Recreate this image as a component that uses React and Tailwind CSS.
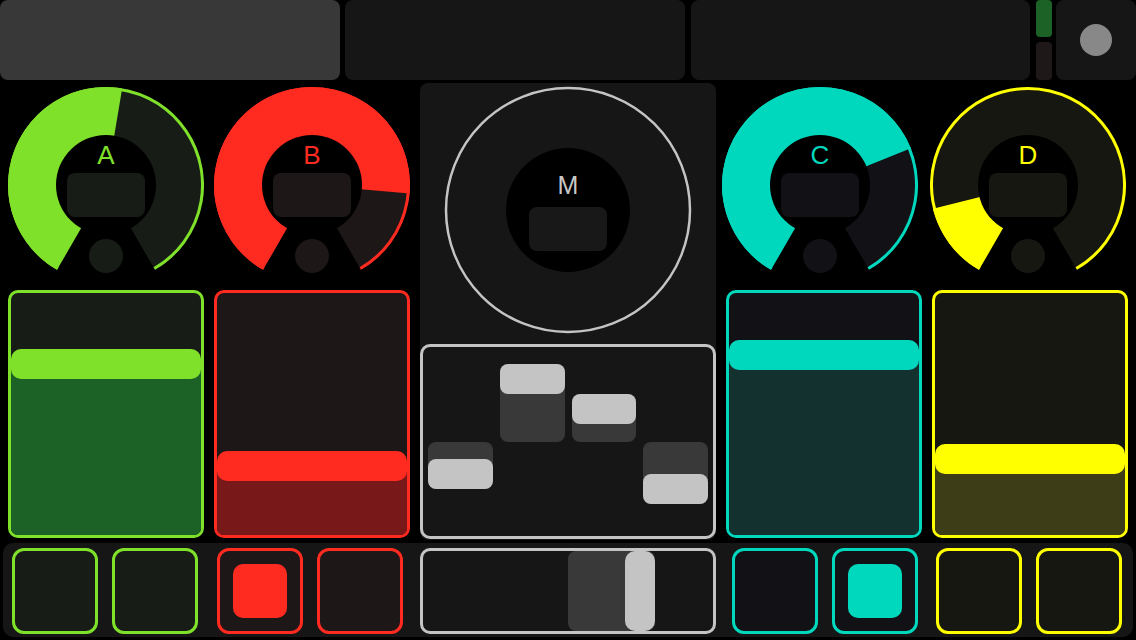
import React from 'react';

const channels = [
  { id: 'A', color: '#80e12b', track: '#171c17', fill: '#1c6125', knob: 9.5, fader: 56, shift: '' },
  { id: 'B', color: '#ff2b20', track: '#1d1717', fill: '#791818', knob: 95, fader: 158, shift: '' },
  { id: 'C', color: '#00d8be', track: '#111116', fill: '#13322f', knob: 68, fader: 47, shift: '-ml-[4px]' },
  { id: 'D', color: '#ffff00', track: '#171711', fill: '#3d3d17', knob: -104, fader: 151, shift: '-ml-[2px]' },
];

function polar(cx, cy, r, deg) {
  const a = ((deg - 90) * Math.PI) / 180;
  return [cx + r * Math.cos(a), cy + r * Math.sin(a)];
}

function sector(cx, cy, r, a0, a1) {
  const [x0, y0] = polar(cx, cy, r, a0);
  const [x1, y1] = polar(cx, cy, r, a1);
  const large = a1 - a0 > 180 ? 1 : 0;
  return `M ${cx} ${cy} L ${x0} ${y0} A ${r} ${r} 0 ${large} 1 ${x1} ${y1} Z`;
}

function arc(cx, cy, r, a0, a1) {
  const [x0, y0] = polar(cx, cy, r, a0);
  const [x1, y1] = polar(cx, cy, r, a1);
  const large = a1 - a0 > 180 ? 1 : 0;
  return `M ${x0} ${y0} A ${r} ${r} 0 ${large} 1 ${x1} ${y1}`;
}

function Knob({ ch }) {
  const c = 98;
  return (
    <svg width="196" height="196" viewBox="0 0 196 196" className={`shrink-0 ${ch.shift}`}>
      <path d={sector(c, c, 98, -150, 150)} fill={ch.track} />
      <path d={sector(c, c, 98, -150, ch.knob)} fill={ch.color} />
      <path d={arc(c, c, 96.5, -150, 150)} fill="none" stroke={ch.color} strokeWidth="3" />
      <circle cx={c} cy={c} r="50" fill="#000" />
      <text x={c} y={c - 21} textAnchor="middle" fontSize="26" fill={ch.color} fontFamily="'Liberation Sans', Arial, sans-serif">
        {ch.id}
      </text>
      <rect x={c - 39} y={c - 12} width="78" height="44" rx="8" fill={ch.track} />
      <circle cx={c} cy={c + 71} r="17" fill={ch.track} />
    </svg>
  );
}

function Fader({ ch }) {
  return (
    <div className="relative mt-[7px] h-[248px] overflow-hidden rounded-[10px] border-[3px]" style={{ borderColor: ch.color, background: ch.track }}>
      <div className="absolute inset-x-0 bottom-0" style={{ top: ch.fader + 15, background: ch.fill }} />
      <div className="absolute inset-x-0 h-[30px] rounded-[10px]" style={{ top: ch.fader, background: ch.color }} />
    </div>
  );
}

function SideColumn({ ch }) {
  return (
    <div className="flex w-[196px] flex-col pt-[4px]">
      <Knob ch={ch} />
      <Fader ch={ch} />
    </div>
  );
}

const bars = [112, 17, 47, 127];

function MultiSlider() {
  const mid = 95;
  return (
    <div className="flex h-[195px] gap-[7px] rounded-[10px] border-[3px] border-[#c4c4c4] bg-[#161616] px-[5px]">
      {bars.map((top, i) => {
        const r0 = Math.min(mid, top);
        const r1 = Math.max(mid, top + 30);
        return (
          <div key={i} className="relative h-full w-[65px]">
            <div className="absolute inset-x-0 rounded-[8px] bg-[#393939]" style={{ top: r0, height: r1 - r0 }} />
            <div className="absolute inset-x-0 h-[30px] rounded-[8px] bg-[#c4c4c4]" style={{ top }} />
          </div>
        );
      })}
    </div>
  );
}

function Master() {
  return (
    <div className="flex w-[296px] flex-col rounded-lg bg-[#161616]">
      <svg width="296" height="261" viewBox="0 0 296 261" className="shrink-0">
        <circle cx="148" cy="127" r="122" fill="none" stroke="#c4c4c4" strokeWidth="2.5" />
        <circle cx="148" cy="127" r="62" fill="#000" />
        <text x="148" y="111" textAnchor="middle" fontSize="25" fill="#c8c8c8" fontFamily="'Liberation Sans', Arial, sans-serif">
          M
        </text>
        <rect x="109" y="124" width="78" height="44" rx="8" fill="#181818" />
      </svg>
      <MultiSlider />
    </div>
  );
}

function Pad({ ch, on, className }) {
  return (
    <div
      className={`flex h-[86px] w-[86px] shrink-0 items-center justify-center rounded-[12px] border-[3px] ${className}`}
      style={{ borderColor: ch.color, background: ch.track }}
    >
      {on && <div className="h-[54px] w-[54px] rounded-[10px]" style={{ background: ch.color }} />}
    </div>
  );
}

export default function App() {
  const [a, b, c, d] = channels;
  return (
    <div className="relative h-[640px] w-[1136px] overflow-hidden bg-black font-['Liberation_Sans',Arial,sans-serif]">
      <div className="flex h-[80px]">
        <div className="w-[340px] rounded-lg bg-[#383838]" />
        <div className="ml-[5px] w-[340px] rounded-lg bg-[#161616]" />
        <div className="ml-[6px] w-[339px] rounded-lg bg-[#161616]" />
        <div className="ml-[6px] flex w-[16px] flex-col gap-[5px]">
          <div className="h-[37px] rounded-[4px] bg-[#1c6125]" />
          <div className="h-[38px] rounded-[4px] bg-[#1e1818]" />
        </div>
        <div className="ml-[4px] flex w-[80px] items-center justify-center rounded-lg bg-[#161616]">
          <div className="h-[32px] w-[32px] rounded-full bg-[#888888]" />
        </div>
      </div>

      <div className="mt-[3px] flex h-[457px] gap-[10px] px-[8px]">
        <SideColumn ch={a} />
        <SideColumn ch={b} />
        <Master />
        <SideColumn ch={c} />
        <SideColumn ch={d} />
      </div>

      <div className="mx-[3px] mt-[3px] flex h-[94px] items-start rounded-[10px] bg-[#161616] pl-[9px] pt-[5px]">
        <Pad ch={a} />
        <Pad ch={a} className="ml-[14px]" />
        <Pad ch={b} on className="ml-[19px]" />
        <Pad ch={b} className="ml-[14px]" />
        <div className="relative ml-[17px] h-[86px] w-[296px] shrink-0 overflow-hidden rounded-[10px] border-[3px] border-[#c4c4c4] bg-[#161616]">
          <div className="absolute inset-y-0 left-[145px] w-[87px] rounded-[8px] bg-[#393939]" />
          <div className="absolute inset-y-0 left-[202px] w-[30px] rounded-[10px] bg-[#c4c4c4]" />
        </div>
        <Pad ch={c} className="ml-[16px]" />
        <Pad ch={c} on className="ml-[14px]" />
        <Pad ch={d} className="ml-[18px]" />
        <Pad ch={d} className="ml-[14px]" />
      </div>
    </div>
  );
}
